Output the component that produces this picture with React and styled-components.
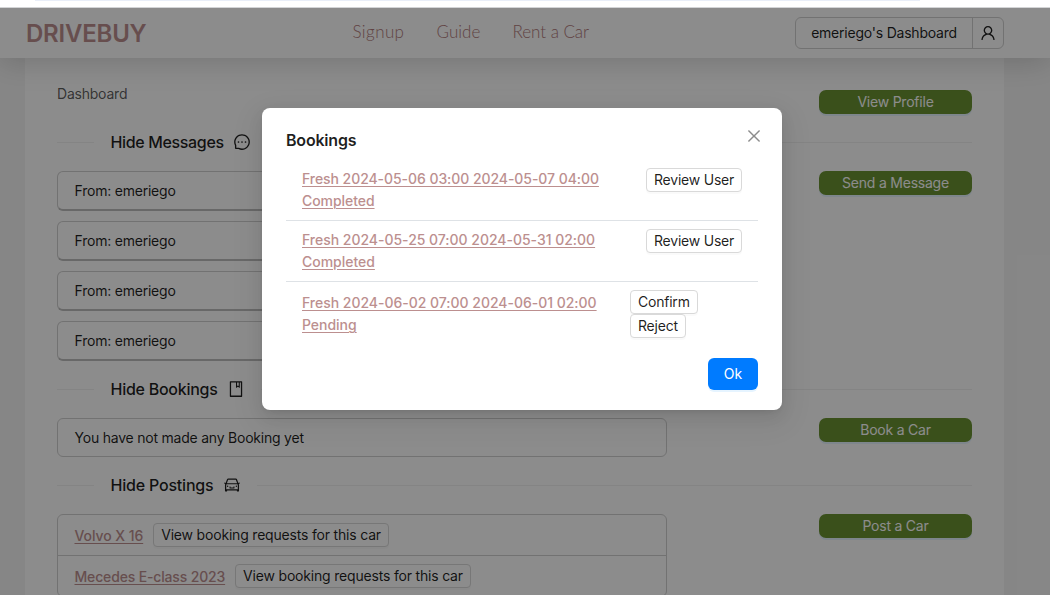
import React from "react";
import styled, { createGlobalStyle, css } from "styled-components";
import {
  AiOutlineBook,
  AiOutlineCar,
  AiOutlineClose,
  AiOutlineMessage,
  AiOutlineUser,
} from "react-icons/ai";

const GlobalStyle = createGlobalStyle`
  * { box-sizing: border-box; }
  html, body { margin: 0; overflow: hidden; }
  body {
    font-family: Inter, "Liberation Sans", sans-serif;
    font-size: 14px;
    line-height: 22px;
    letter-spacing: -0.22px;
    color: rgba(0, 0, 0, 0.88);
    background: #fff;
  }
  button { letter-spacing: inherit; }
`;

const Screen = styled.div`
  height: 595px;
  display: flex;
  flex-direction: column;
  overflow: hidden;
`;

const BrowserEdge = styled.div`
  flex: 0 0 8px;
  padding: 0 130px 0 35px;
  background: #fff;
  border-bottom: 1px solid #d3d4d6;
`;

const AddressBar = styled.div`
  height: 1px;
  background: #e9eef8;
`;

const Page = styled.div`
  position: relative;
  flex: 1;
  min-height: 0;
  display: flex;
  flex-direction: column;
  background: #f5f5f5;
  overflow: hidden;
`;

const Header = styled.header`
  position: relative;
  z-index: 1;
  flex: 0 0 50px;
  display: flex;
  align-items: center;
  padding: 0 46px 0 26px;
  background: #fff;
  box-shadow: 0 4px 30px rgba(0, 0, 0, 0.17);
`;

const Logo = styled.div`
  width: 326.5px;
  padding-top: 1px;
  font-size: 24px;
  font-weight: 600;
  letter-spacing: -0.22px;
  color: rosybrown;
`;

const Nav = styled.nav`
  flex: 1;
  display: flex;
  gap: 32px;
  padding-bottom: 2px;
  font-family: Lato, "Open Sans", sans-serif;
  font-weight: 300;
  font-size: 17px;
  color: #b07a7a;
`;

const NavLink = styled.span`
  width: ${(p) => p.$width}px;
  white-space: nowrap;
  letter-spacing: ${(p) => p.$spacing || 0}px;
`;

const UserGroup = styled.div`
  display: flex;
  width: 209px;
  height: 32px;
  border: 1px solid #d0d0d0;
  border-radius: 6px;
`;

const UserName = styled.div`
  flex: 1;
  display: flex;
  align-items: center;
  justify-content: center;
  white-space: nowrap;
`;

const UserIcon = styled.div`
  width: 31px;
  display: flex;
  align-items: center;
  justify-content: center;
  font-size: 18px;
  border-left: 1px solid #d0d0d0;
`;

const Main = styled.main`
  flex: 1;
  min-height: 0;
  margin: 0 46px 0 25px;
  padding: 32px 32px 0;
  background: #fff;
`;

const Row = styled.section`
  display: flex;
  justify-content: space-between;
  align-items: flex-start;
  height: ${(p) => p.$height}px;
`;

const Crumb = styled.div`
  line-height: 8px;
  color: rgba(0, 0, 0, 0.65);
`;

const Column = styled.div`
  width: 610px;
  display: flex;
  flex-direction: column;
  gap: 10px;
`;

const ActionButton = styled.button`
  width: 153px;
  height: 24px;
  padding: 0;
  border: 0;
  border-radius: 7px;
  font: inherit;
  color: #fff;
  background: #6a9232;
  box-shadow: 0 2px 0 rgba(5, 145, 255, 0.1);
`;

const Divider = styled.div`
  display: flex;
  align-items: center;
  height: 57px;
  font-size: 16px;
  font-weight: 500;

  &::before,
  &::after {
    content: "";
    height: 1px;
    background: rgba(5, 5, 5, 0.06);
  }
  &::before { flex: 0 0 37px; }
  &::after { flex: 1; }
`;

const DividerLabel = styled.div`
  display: flex;
  align-items: center;
  gap: ${(p) => p.$gap || 9}px;
  padding: 0 16px 2px 16.5px;
  letter-spacing: ${(p) => p.$spacing}px;
`;

const cardFrame = css`
  border: 1px solid #d0d0d0;
  border-radius: 6px;
`;

const MessageCard = styled.div`
  ${cardFrame}
  height: 40px;
  padding: 8px 16.5px;
  border-bottom: 2px solid #bdbdbd;
`;

const ListCard = styled.div`
  ${cardFrame}
`;

const ListItem = styled.div`
  display: flex;
  align-items: center;
  gap: 10px;
  padding: 8px 16.5px 7px;
  & + & { border-top: 1px solid #d0d0d0; }
`;

const CarItem = styled(ListItem)`
  padding-bottom: 8px;
`;

const RoseLink = styled.a`
  color: rosybrown;
  font-weight: 500;
  text-decoration: underline;
  text-underline-offset: 2px;
  text-decoration-thickness: 1px;
  letter-spacing: ${(p) => p.$spacing || 0}px;
`;

const CarLink = styled(RoseLink)`
  padding-top: 2px;
`;

const SmallButton = styled.button`
  height: 24px;
  padding: 0 7px;
  border: 1px solid #d9d9d9;
  border-radius: 4px;
  font: inherit;
  line-height: 22px;
  white-space: nowrap;
  color: rgba(0, 0, 0, 0.88);
  background: #fff;
  box-shadow: 0 2px 0 rgba(0, 0, 0, 0.02);
`;

const RequestsButton = styled(SmallButton)`
  letter-spacing: -0.19px;
`;

const Mask = styled.div`
  position: absolute;
  inset: 0;
  z-index: 2;
  background: rgba(0, 0, 0, 0.45);
`;

const Modal = styled.div`
  position: absolute;
  z-index: 3;
  top: 100px;
  left: 262px;
  width: 520px;
  height: 302px;
  padding: 20px 24px;
  border-radius: 8px;
  background: #fff;
  box-shadow:
    0 6px 16px 0 rgba(0, 0, 0, 0.08),
    0 3px 6px -4px rgba(0, 0, 0, 0.12),
    0 9px 28px 8px rgba(0, 0, 0, 0.05);
`;

const ModalHead = styled.div`
  display: flex;
  justify-content: space-between;
  height: 24px;
  margin-bottom: 8px;
`;

const ModalTitle = styled.div`
  font-size: 16px;
  font-weight: 600;
  line-height: 24px;
  letter-spacing: -0.2px;
`;

const CloseButton = styled.button`
  width: 22px;
  height: 22px;
  margin: -3px -7px 0 0;
  padding: 0;
  border: 0;
  display: flex;
  align-items: center;
  justify-content: center;
  font-size: 18px;
  color: rgba(0, 0, 0, 0.45);
  background: none;
`;

const BookingItem = styled.div`
  display: flex;
  align-items: center;
  justify-content: space-between;
  padding: 8px 16px;
  & + & { border-top: 1px solid #dee2e6; }
`;

const BookingText = styled.div`
  width: 310px;
`;

const BookingActions = styled.div`
  align-self: flex-start;
  width: ${(p) => (p.$stacked ? "112px" : "96px")};
  display: flex;
  flex-direction: column;
  align-items: flex-start;
`;

const ModalFoot = styled.div`
  display: flex;
  justify-content: flex-end;
  margin-top: 12px;
`;

const OkButton = styled.button`
  width: 50px;
  height: 32px;
  padding: 0;
  border: 0;
  border-radius: 6px;
  font: inherit;
  letter-spacing: 0;
  color: #fff;
  background: #007bff;
  box-shadow: 0 2px 0 rgba(5, 145, 255, 0.1);
`;

const messages = ["emeriego", "emeriego", "emeriego", "emeriego"];
const cars = [
  { name: "Volvo X 16", spacing: -0.07 },
  { name: "Mecedes E-class 2023", spacing: -0.16 },
];
const bookings = [
  { when: "Fresh 2024-05-06 03:00 2024-05-07 04:00", spacing: -0.06, status: "Completed", actions: ["Review User"] },
  { when: "Fresh 2024-05-25 07:00 2024-05-31 02:00", spacing: -0.02, status: "Completed", actions: ["Review User"] },
  { when: "Fresh 2024-06-02 07:00 2024-06-01 02:00", spacing: -0.02, status: "Pending", actions: ["Confirm", "Reject"] },
];

export default function App() {
  return (
    <Screen>
      <GlobalStyle />
      <BrowserEdge>
        <AddressBar />
      </BrowserEdge>
      <Page>
        <Header>
          <Logo>DRIVEBUY</Logo>
          <Nav>
            <NavLink $width={52} $spacing={0.4}>Signup</NavLink>
            <NavLink $width={44} $spacing={0.05}>Guide</NavLink>
            <NavLink $width={80} $spacing={-0.04}>Rent a Car</NavLink>
          </Nav>
          <UserGroup>
            <UserName>emeriego's Dashboard</UserName>
            <UserIcon><AiOutlineUser /></UserIcon>
          </UserGroup>
        </Header>
        <Main>
          <Row $height={24}>
            <Crumb>Dashboard</Crumb>
            <ActionButton>View Profile</ActionButton>
          </Row>
          <Divider>
            <DividerLabel $spacing={-0.35}>Hide Messages <AiOutlineMessage size={18} /></DividerLabel>
          </Divider>
          <Row $height={190}>
            <Column>
              {messages.map((name, i) => (
                <MessageCard key={i}>From: {name}</MessageCard>
              ))}
            </Column>
            <ActionButton>Send a Message</ActionButton>
          </Row>
          <Divider>
            <DividerLabel $spacing={-0.26}>Hide Bookings <AiOutlineBook size={18} /></DividerLabel>
          </Divider>
          <Row $height={39}>
            <Column>
              <ListCard>
                <ListItem>You have not made any Booking yet</ListItem>
              </ListCard>
            </Column>
            <ActionButton>Book a Car</ActionButton>
          </Row>
          <Divider>
            <DividerLabel $spacing={-0.2} $gap={10}>Hide Postings <AiOutlineCar size={18} /></DividerLabel>
          </Divider>
          <Row $height={90}>
            <Column>
              <ListCard>
                {cars.map((car) => (
                  <CarItem key={car.name}>
                    <CarLink $spacing={car.spacing}>{car.name}</CarLink>
                    <RequestsButton>View booking requests for this car</RequestsButton>
                  </CarItem>
                ))}
              </ListCard>
            </Column>
            <ActionButton>Post a Car</ActionButton>
          </Row>
        </Main>
        <Mask />
        <Modal>
          <ModalHead>
            <ModalTitle>Bookings</ModalTitle>
            <CloseButton aria-label="Close"><AiOutlineClose /></CloseButton>
          </ModalHead>
          {bookings.map((b) => (
            <BookingItem key={b.when}>
              <BookingText>
                <RoseLink $spacing={b.spacing}>{b.when} {b.status}</RoseLink>
              </BookingText>
              <BookingActions $stacked={b.actions.length > 1}>
                {b.actions.map((a) => (
                  <SmallButton key={a}>{a}</SmallButton>
                ))}
              </BookingActions>
            </BookingItem>
          ))}
          <ModalFoot>
            <OkButton>Ok</OkButton>
          </ModalFoot>
        </Modal>
      </Page>
    </Screen>
  );
}
